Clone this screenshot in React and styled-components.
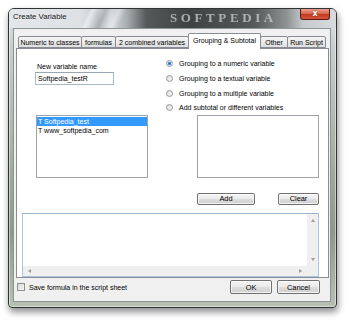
import React from "react";
import styled, { createGlobalStyle } from "styled-components";

const GlobalStyle = createGlobalStyle`
  html, body { margin: 0; padding: 0; background: #ffffff; }
  body { font-family: "Liberation Sans", Arial, sans-serif; font-size: 7px; color: #000; }
  * { box-sizing: border-box; }
`;

const Page = styled.div`
  width: 350px;
  height: 323px;
  padding: 8px 0 0 8px;
  overflow: hidden;
`;

const Window = styled.div`
  position: relative;
  width: 329px;
  height: 300px;
  border: 1px solid #2f3533;
  border-radius: 6px 6px 4px 4px;
  background: linear-gradient(180deg, #dfe3e6 0%, #c9cfcf 12%, #aab2a9 45%, #8e988b 75%, #b9c0b6 100%);
  box-shadow: 1px 4px 7px rgba(0, 0, 0, 0.45), inset 0 0 0 1px rgba(255, 255, 255, 0.45);
  display: flex;
  flex-direction: column;
`;

const TitleBar = styled.div`
  position: relative;
  height: 19px;
  flex: none;
  display: flex;
  align-items: flex-start;
  padding-left: 4px;
  border-radius: 5px 5px 0 0;
  overflow: hidden;
  background:
    linear-gradient(115deg, transparent 0%, transparent 24%, rgba(255,255,255,0.5) 25%, transparent 27%, rgba(120,125,128,0.35) 29%, transparent 31%, rgba(255,255,255,0.4) 33%, transparent 35%, transparent 100%),
    linear-gradient(90deg, #e3e7ea 0%, #dde1e4 22%, #c4c9cc 27%, #d6dadc 31%, #a9aeb0 36%, #55595a 42%, #3e4243 55%, #55595a 75%, #8d9293 85%, #c7cbce 90%, #d7dbde 100%);
`;

const Title = styled.span`
  position: relative;
  z-index: 1;
  font-family: "Liberation Sans", Arial, sans-serif;
  font-size: 7.8px;
  line-height: 16px;
  color: #111;
  text-shadow: 0 0 3px rgba(255, 255, 255, 0.9);
`;

const GlassMark = styled.span`
  position: absolute;
  left: 161px;
  top: 2px;
  font-family: "Liberation Serif", serif;
  font-weight: bold;
  font-size: 13px;
  line-height: 13px;
  letter-spacing: 3.6px;
  color: rgba(205, 208, 210, 0.75);
  filter: blur(0.75px);
`;

const CloseButton = styled.div`
  position: relative;
  z-index: 1;
  margin-left: auto;
  margin-right: 6px;
  width: 30px;
  height: 11px;
  border: 1px solid #5e1a12;
  border-top: none;
  border-radius: 0 0 3px 3px;
  background: linear-gradient(180deg, #e9a08f 0%, #d86a53 45%, #c23a22 55%, #d0573c 100%);
  display: flex;
  align-items: center;
  justify-content: center;
  color: #fff;
  font-family: "DejaVu Sans", sans-serif;
  font-weight: bold;
  font-size: 8px;
  line-height: 8px;
  text-shadow: 0 0 2px #7a1c10;
`;

const Client = styled.div`
  flex: none;
  height: 274px;
  margin: 0 5px 0 4px;
  border: 1px solid #8c9494;
  background: #f0f0f0;
  padding: 4px 1px 0 2px;
  display: flex;
  flex-direction: column;
`;

const TabStrip = styled.div`
  position: relative;
  z-index: 2;
  height: 15px;
  padding-left: 2px;
  display: flex;
  align-items: flex-end;
`;

const Tab = styled.div`
  width: ${(p) => p.$w}px;
  height: ${(p) => (p.$active ? 16 : 12)}px;
  margin-right: -1px;
  margin-bottom: ${(p) => (p.$active ? -1 : 0)}px;
  position: relative;
  z-index: ${(p) => (p.$active ? 2 : 1)};
  border: 1px solid #898c95;
  border-bottom: ${(p) => (p.$active ? "none" : "1px solid #898c95")};
  border-radius: 2px 2px 0 0;
  background: ${(p) => (p.$active ? "#ffffff" : "linear-gradient(180deg, #f4f4f4 0%, #ebebeb 50%, #dedede 100%)")};
  padding-bottom: ${(p) => (p.$active ? 2 : 0)}px;
  display: flex;
  align-items: center;
  justify-content: center;
  white-space: nowrap;
  font-size: 7px;
  line-height: 9px;
`;

const Panel = styled.div`
  position: relative;
  z-index: 1;
  height: 230px;
  flex: none;
  border: 1px solid #898c95;
  background: #ffffff;
  padding: 0 9px 0 5px;
  display: flex;
  flex-direction: column;
`;

const Columns = styled.div`
  position: relative;
  display: grid;
  grid-template-columns: 114px 153px;
  column-gap: 17px;
  padding-left: 13px;
`;

const Column = styled.div`
  display: flex;
  flex-direction: column;
  padding-top: ${(p) => p.$top}px;
`;

const FieldLabel = styled.div`
  height: 9px;
  line-height: 9px;
  padding-left: 2px;
`;

const TextInput = styled.div`
  margin-top: 1px;
  width: 79px;
  height: 13px;
  border: 1px solid #a9b9c9;
  border-top-color: #9aa6b3;
  background: #fff;
  padding-left: 2px;
  line-height: 11px;
`;

const ListBox = styled.div`
  margin-top: ${(p) => p.$mt}px;
  margin-left: ${(p) => p.$ml}px;
  width: ${(p) => p.$w}px;
  height: 63px;
  border: 1px solid #9ea3aa;
  background: #fff;
  padding-top: 1px;
`;

const ListItem = styled.div`
  height: 9px;
  line-height: 9px;
  padding-left: 1px;
  white-space: nowrap;
  background: ${(p) => (p.$selected ? "#3399ff" : "transparent")};
  color: ${(p) => (p.$selected ? "#ffffff" : "#000000")};
`;

const RadioRow = styled.div`
  height: 14.6px;
  display: flex;
  align-items: center;
  gap: 6px;
  white-space: nowrap;
`;

const Radio = styled.span`
  width: 7px;
  height: 7px;
  flex: none;
  border-radius: 50%;
  border: 1px solid #9a9c9e;
  background: ${(p) =>
    p.$checked
      ? "radial-gradient(circle, #1d5fa6 0%, #3f8ad6 35%, #cfe3f6 55%, #f2f2f2 100%)"
      : "radial-gradient(circle at 60% 60%, #f4f4f4 0%, #e2e2e2 60%, #d4d4d4 100%)"};
`;

const ButtonRow = styled.div`
  margin-top: 15px;
  padding-left: 31px;
  display: flex;
  justify-content: space-between;
`;

const Button = styled.div`
  width: ${(p) => p.$w}px;
  height: ${(p) => p.$h}px;
  border: 1px solid #707070;
  border-radius: 2px;
  background: linear-gradient(180deg, #f3f3f3 0%, #ebebeb 48%, #dddddd 52%, #cfcfcf 100%);
  box-shadow: inset 0 0 0 1px rgba(255, 255, 255, 0.75);
  display: flex;
  align-items: center;
  justify-content: center;
  font-size: 7.4px;
  line-height: 9px;
`;

const ScrollBox = styled.div`
  margin-top: 8px;
  height: 64px;
  border: 1px solid #adc5dc;
  border-top-color: #98b4cf;
  background: #fff;
  display: grid;
  grid-template-columns: 1fr 11px;
  grid-template-rows: 1fr 10px;
`;

const TextField = styled.div`
  background: #fff;
`;

const VScroll = styled.div`
  background: #efefef;
  display: flex;
  flex-direction: column;
  justify-content: space-between;
  align-items: center;
  padding: 5px 0 5px;
`;

const HScroll = styled.div`
  background: #efefef;
  display: flex;
  justify-content: space-between;
  align-items: center;
  padding: 0 5px 0 5px;
`;

const Corner = styled.div`
  background: #efefef;
`;

const Arrow = ({ dir }) => {
  const pts = {
    up: "0,3 2,0 4,3",
    down: "0,0 4,0 2,3",
    left: "3,0 3,4 0,2",
    right: "0,0 0,4 3,2",
  }[dir];
  const vertical = dir === "up" || dir === "down";
  return (
    <svg width={vertical ? 4 : 3} height={vertical ? 3 : 4} viewBox={vertical ? "0 0 4 3" : "0 0 3 4"}>
      <polygon points={pts} fill="#9a9a9a" />
    </svg>
  );
};

const Footer = styled.div`
  height: 23px;
  flex: none;
  padding: 0 9px 5px 1px;
  display: flex;
  align-items: center;
`;

const CheckBox = styled.span`
  width: 8px;
  height: 8px;
  flex: none;
  border: 1px solid #8f8f8f;
  background: linear-gradient(135deg, #d8d8d8 0%, #f6f6f6 100%);
`;

const CheckLabel = styled.span`
  margin-left: 4px;
  white-space: nowrap;
`;

const FooterButtons = styled.div`
  margin-left: auto;
  display: flex;
  gap: 5px;
`;

const tabs = [
  { label: "Numeric to classes", w: 64 },
  { label: "formulas", w: 35 },
  { label: "2 combined variables", w: 74 },
  { label: "Grouping & Subtotal", w: 73, active: true },
  { label: "Other", w: 28 },
  { label: "Run Script", w: 39 },
];

const radios = [
  { label: "Grouping to a numeric variable", checked: true },
  { label: "Grouping to a textual variable" },
  { label: "Grouping to a multiple variable" },
  { label: "Add subtotal or different variables" },
];

export default function App() {
  return (
    <>
      <GlobalStyle />
      <Page>
        <Window>
          <TitleBar>
            <Title>Create Variable</Title>
            <GlassMark>SOFTPEDIA</GlassMark>
            <CloseButton>x</CloseButton>
          </TitleBar>
          <Client>
            <TabStrip>
              {tabs.map((t) => (
                <Tab key={t.label} $w={t.w} $active={t.active}>
                  {t.label}
                </Tab>
              ))}
            </TabStrip>
            <Panel>
              <Columns>
                <Column $top={13}>
                  <FieldLabel>New variable name</FieldLabel>
                  <TextInput>Softpedia_testR</TextInput>
                  <ListBox $mt={30} $ml={1} $w={112}>
                    <ListItem $selected>T Softpedia_test</ListItem>
                    <ListItem>T www_softpedia_com</ListItem>
                  </ListBox>
                </Column>
                <Column $top={7.6}>
                  {radios.map((r) => (
                    <RadioRow key={r.label}>
                      <Radio $checked={r.checked} />
                      <span>{r.label}</span>
                    </RadioRow>
                  ))}
                  <ListBox $mt={0} $ml={31} $w={122} />
                  <ButtonRow>
                    <Button $w={58} $h={12}>Add</Button>
                    <Button $w={41} $h={12}>Clear</Button>
                  </ButtonRow>
                </Column>
              </Columns>
              <ScrollBox>
                <TextField />
                <VScroll>
                  <Arrow dir="up" />
                  <Arrow dir="down" />
                </VScroll>
                <HScroll>
                  <Arrow dir="left" />
                  <Arrow dir="right" />
                </HScroll>
                <Corner />
              </ScrollBox>
            </Panel>
            <Footer>
              <CheckBox />
              <CheckLabel>Save formula in the script sheet</CheckLabel>
              <FooterButtons>
                <Button $w={42} $h={14}>OK</Button>
                <Button $w={43} $h={14}>Cancel</Button>
              </FooterButtons>
            </Footer>
          </Client>
        </Window>
      </Page>
    </>
  );
}
